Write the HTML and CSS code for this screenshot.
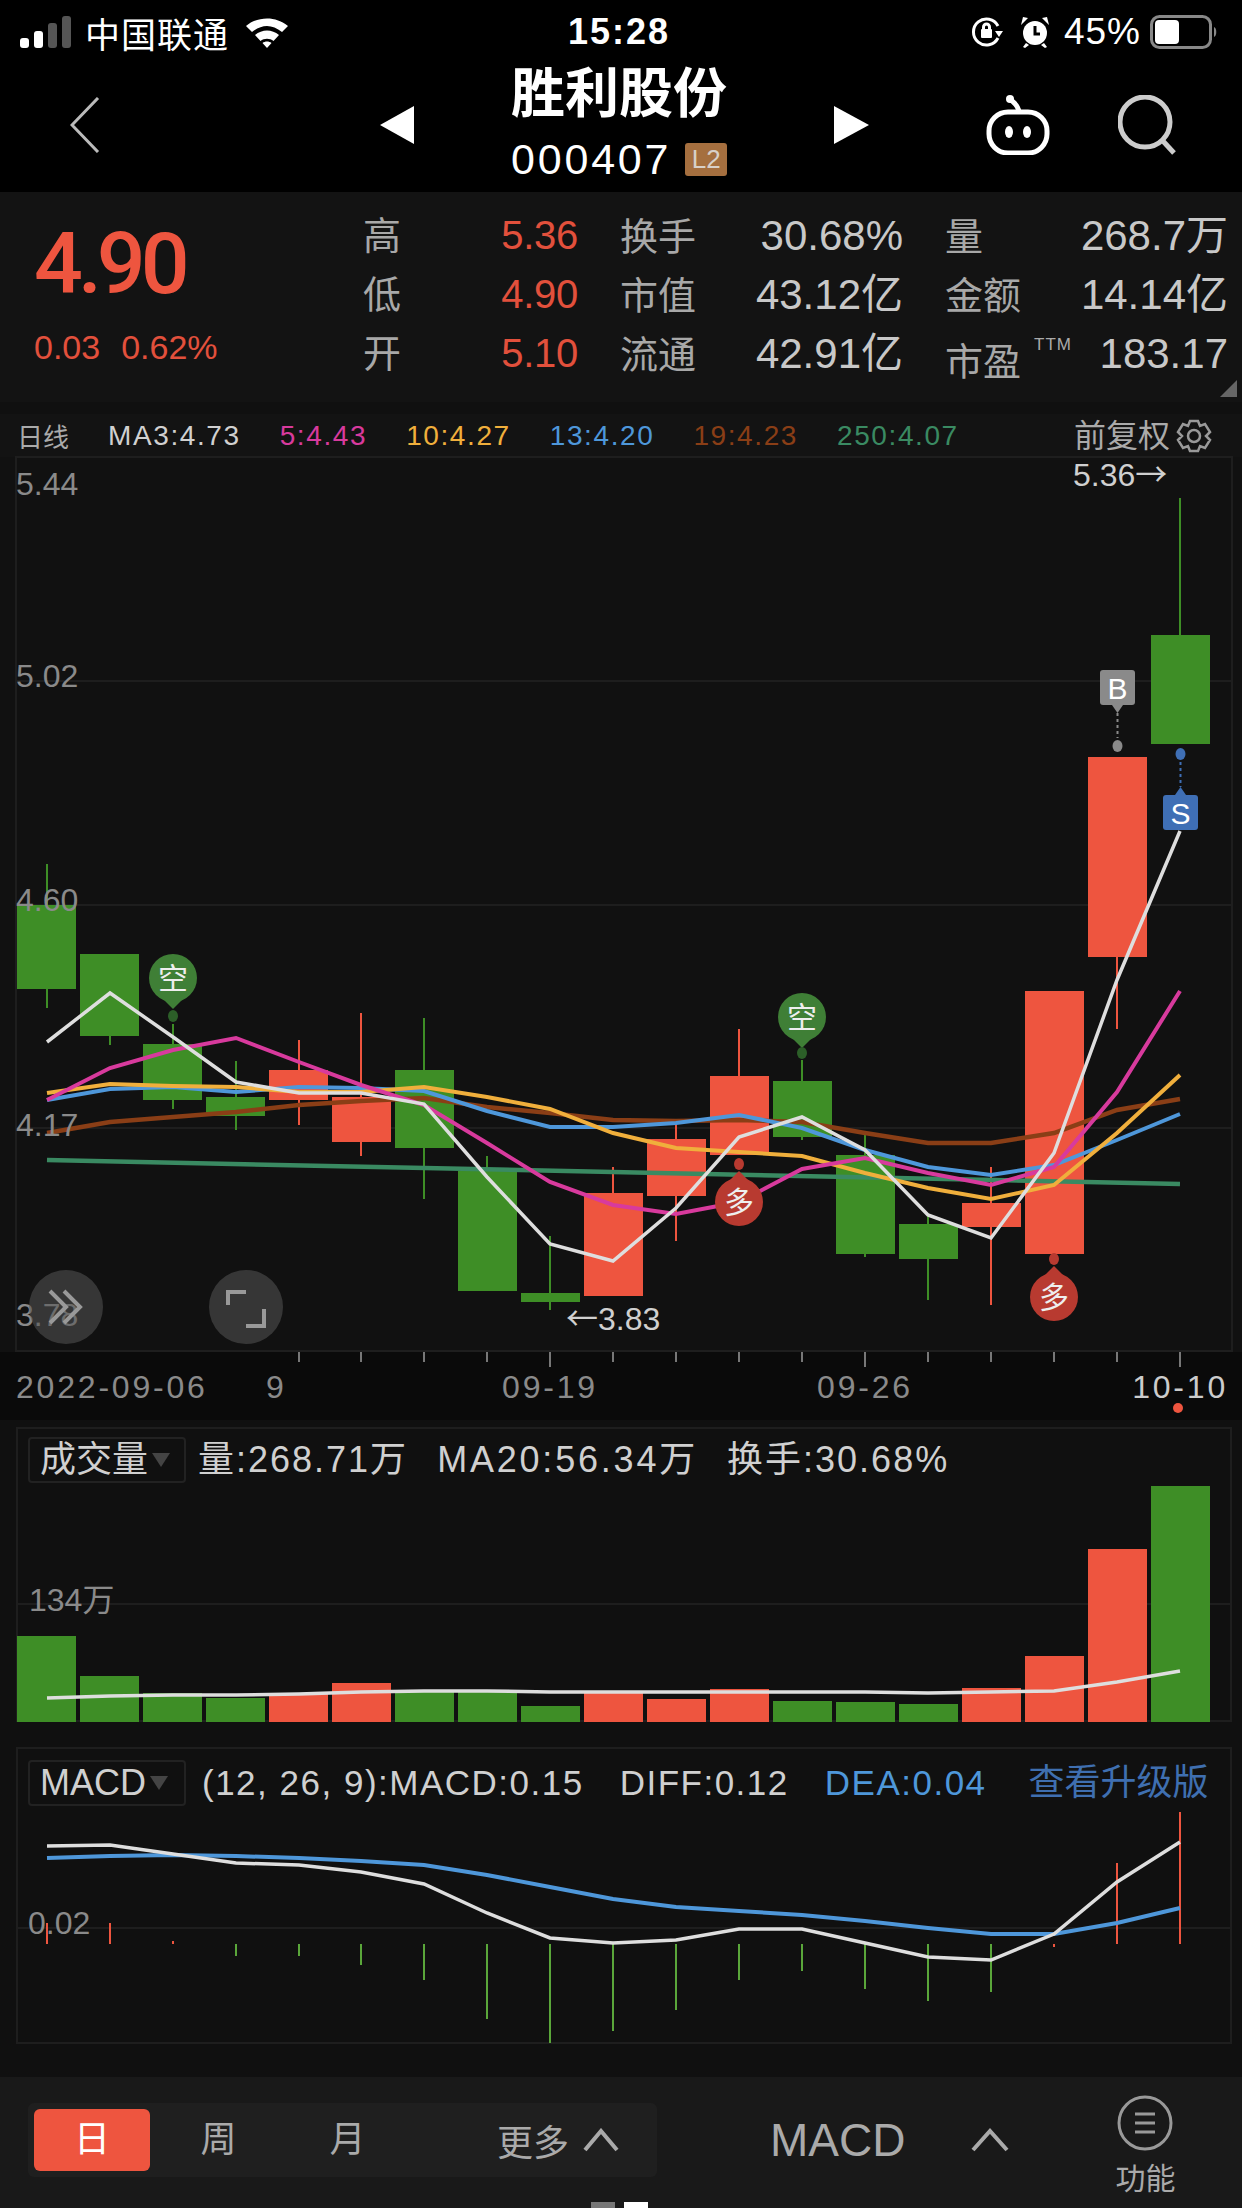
FILE: index.html
```html
<!DOCTYPE html>
<html lang="zh-CN">
<head>
    <meta charset="UTF-8">
    <meta name="viewport" content="width=device-width, initial-scale=1.0">
    <title>胜利股份 000407</title>
    <link rel="stylesheet" href="styles.css">
</head>
<body>

    <div class="status-bar">
        <div class="status-left">
            <svg class="signal" width="52" height="32" viewBox="0 0 52 32">
                <rect class="on" x="0" y="22" width="9" height="10" rx="3"/>
                <rect class="on" x="14" y="15" width="9" height="17" rx="3"/>
                <rect class="off" x="28" y="7" width="9" height="25" rx="3"/>
                <rect class="off" x="42" y="0" width="9" height="32" rx="3"/>
            </svg>
            <span class="carrier">中国联通</span>
            <svg class="wifi" width="46" height="32" viewBox="0 0 46 32">
                <path d="M2 10 C14 0 32 0 44 10 L38 16 C28 8 18 8 8 16 Z"/>
                <path d="M11 19 C18 13 28 13 35 19 L29.500 25 C26 22 20 22 16.500 25 Z"/>
                <path d="M18.500 27 C21 25 25 25 27.500 27 L23 32 Z"/>
            </svg>
        </div>
        <div class="status-time">15:28</div>
        <div class="status-right">
            <svg class="rotate-lock" width="32" height="32" viewBox="0 0 32 32">
                <path d="M27 22 A13 13 0 1 1 27 10"/>
                <path class="solid" d="M24 15 L32 15 L28 21 Z"/>
                <rect class="solid" x="10" y="13" width="11" height="9" rx="1"/>
                <path d="M12.500 13 V11 A3 3 0 0 1 18.500 11 V13"/>
            </svg>
            <svg class="alarm" width="30" height="32" viewBox="0 0 30 32">
                <circle class="solid" cx="15" cy="17" r="12"/>
                <path class="hand" d="M15 10 V18 L20 18"/>
                <path class="solid" d="M1 9 L8 2 L3 1 Z M29 9 L22 2 L27 1 Z M6 27 L3 31 L5 32 L9 29 Z M24 27 L27 31 L25 32 L21 29 Z"/>
            </svg>
            <span class="battery-text">45%</span>
            <svg class="battery" width="68" height="34" viewBox="0 0 68 34">
                <rect class="shell" x="1.500" y="1.500" width="59" height="31" rx="8"/>
                <rect class="level" x="5" y="5" width="24" height="24" rx="4"/>
                <path class="cap" d="M64 12 C67 13 67 21 64 22 Z"/>
            </svg>
        </div>
    </div>

    <div class="nav">
        <svg class="nav-back" width="30" height="56" viewBox="0 0 30 56">
            <path d="M28 1 L2 28 L28 55"/>
        </svg>
        <svg class="nav-prev" width="34" height="38" viewBox="0 0 34 38">
            <path d="M34 0 V38 L0 19 Z"/>
        </svg>
        <div class="nav-title">
            <div class="stock-name">胜利股份</div>
            <div class="stock-code">000407<span class="badge-l2">L2</span></div>
        </div>
        <svg class="nav-next" width="35" height="38" viewBox="0 0 35 38">
            <path d="M0 0 V38 L35 19 Z"/>
        </svg>
        <svg class="nav-robot" width="64" height="60" viewBox="0 0 64 60">
            <path class="outline" d="M25 5 C28 8 32 10 33 17"/>
            <circle class="fill" cx="24" cy="4" r="4"/>
            <rect class="outline" x="3" y="17" width="58" height="41" rx="19"/>
            <ellipse class="fill" cx="23" cy="37" rx="4" ry="6"/>
            <ellipse class="fill" cx="41" cy="37" rx="4" ry="6"/>
        </svg>
        <svg class="nav-search" width="60" height="60" viewBox="0 0 60 60">
            <circle cx="27" cy="27" r="25"/>
            <path d="M44 45 L56 58"/>
        </svg>
    </div>

    <div class="quote">
        <div class="quote-main">
            <div class="price">4.90</div>
            <div class="change"><span>0.03</span><span>0.62%</span></div>
        </div>
        <div class="quote-grid">
            <div class="cell"><span class="label">高</span><span class="up-text">5.36</span></div>
            <div class="cell"><span class="label">换手</span><span class="value">30.68%</span></div>
            <div class="cell"><span class="label">量</span><span class="value">268.7万</span></div>
            <div class="cell"><span class="label">低</span><span class="up-text">4.90</span></div>
            <div class="cell"><span class="label">市值</span><span class="value">43.12亿</span></div>
            <div class="cell"><span class="label">金额</span><span class="value">14.14亿</span></div>
            <div class="cell"><span class="label">开</span><span class="up-text">5.10</span></div>
            <div class="cell"><span class="label">流通</span><span class="value">42.91亿</span></div>
            <div class="cell"><span class="label label-low">市盈<sup class="ttm">TTM</sup></span><span class="value">183.17</span></div>
        </div>
        <div class="corner"></div>
    </div>

    <div class="legend">
        <span class="legend-name">日线</span>
        <span class="ma3">MA3:4.73</span>
        <span class="ma5">5:4.43</span>
        <span class="ma10">10:4.27</span>
        <span class="ma13">13:4.20</span>
        <span class="ma19">19:4.23</span>
        <span class="ma250">250:4.07</span>
        <span class="legend-right">前复权
            <svg class="gear" width="36" height="36" viewBox="0 0 36 36">
                <path d="M14 3 H22 L24 8 L29 6 L34 14 L30 18 L34 22 L29 30 L24 28 L22 33 H14 L12 28 L7 30 L2 22 L6 18 L2 14 L7 6 L12 8 Z"/>
                <circle cx="18" cy="18" r="6"/>
            </svg>
        </span>
    </div>

    <svg class="chart-main" width="1242" height="963" viewBox="0 457 1242 963">
        <rect class="axis-bg" x="0" y="1352" width="1242" height="68"/>
        <rect class="frame" x="16" y="457" width="1216" height="894"/>
        <path class="grid" d="M16 681 H1232 M16 905 H1232 M16 1128 H1232"/>

        <!-- candles: body + wick -->
        <g class="down">
            <rect x="46" y="864" width="2" height="144"/><rect x="17" y="905" width="59" height="84"/>
            <rect x="109" y="954" width="2" height="91"/><rect x="80" y="954" width="59" height="82"/>
            <rect x="172" y="1024" width="2" height="85"/><rect x="143" y="1044" width="59" height="56"/>
            <rect x="235" y="1061" width="2" height="69"/><rect x="206" y="1097" width="59" height="19"/>
            <rect x="423" y="1018" width="2" height="181"/><rect x="395" y="1070" width="59" height="78"/>
            <rect x="486" y="1156" width="2" height="135"/><rect x="458" y="1171" width="59" height="120"/>
            <rect x="549" y="1236" width="2" height="74"/><rect x="521" y="1293" width="59" height="9"/>
            <rect x="801" y="1060" width="2" height="80"/><rect x="773" y="1081" width="59" height="56"/>
            <rect x="864" y="1135" width="2" height="122"/><rect x="836" y="1155" width="59" height="99"/>
            <rect x="927" y="1215" width="2" height="85"/><rect x="899" y="1224" width="59" height="35"/>
            <rect x="1179" y="498" width="2" height="246"/><rect x="1151" y="635" width="59" height="109"/>
        </g>
        <g class="rise">
            <rect x="298" y="1040" width="2" height="85"/><rect x="269" y="1070" width="59" height="30"/>
            <rect x="360" y="1013" width="2" height="143"/><rect x="332" y="1097" width="59" height="45"/>
            <rect x="612" y="1167" width="2" height="129"/><rect x="584" y="1193" width="59" height="103"/>
            <rect x="675" y="1124" width="2" height="117"/><rect x="647" y="1139" width="59" height="57"/>
            <rect x="738" y="1029" width="2" height="126"/><rect x="710" y="1076" width="59" height="79"/>
            <rect x="990" y="1167" width="2" height="138"/><rect x="962" y="1203" width="59" height="24"/>
            <rect x="1025" y="991" width="59" height="263"/>
            <rect x="1116" y="957" width="2" height="72"/><rect x="1088" y="757" width="59" height="200"/>
        </g>

        <!-- moving averages -->
        <path class="line line-ma250" d="M47 1160 L1180 1184"/>
        <polyline class="line line-ma19" points="47,1133 110,1122 173,1117 236,1112 299,1105 361,1101 424,1098 487,1107 550,1113 613,1120 676,1121 739,1120 802,1122 865,1133 928,1143 991,1143 1054,1133 1117,1110 1180,1099"/>
        <polyline class="line line-ma13" points="47,1100 110,1089 173,1087 236,1092 299,1087 361,1088 424,1091 487,1111 550,1127 613,1127 676,1123 739,1115 802,1128 865,1150 928,1167 991,1175 1054,1165 1117,1140 1180,1114"/>
        <polyline class="line line-ma10" points="47,1093 110,1084 173,1086 236,1087 299,1092 361,1092 424,1087 487,1097 550,1109 613,1133 676,1148 739,1152 802,1156 865,1173 928,1188 991,1199 1054,1185 1117,1133 1180,1075"/>
        <polyline class="line line-ma5" points="47,1100 110,1068 173,1050 236,1038 299,1062 361,1085 424,1105 487,1143 550,1182 613,1205 676,1214 739,1202 802,1169 865,1158 928,1173 991,1185 1054,1167 1117,1092 1180,991"/>
        <polyline class="line line-ma3" points="47,1042 110,993 173,1037 236,1082 299,1093 361,1093 424,1104 487,1177 550,1244 613,1261 676,1208 739,1137 802,1117 865,1150 928,1215 991,1238 1054,1153 1117,980 1180,831"/>

        <!-- axis labels -->
        <text class="axis-label" x="16" y="495">5.44</text>
        <text class="axis-label" x="16" y="687">5.02</text>
        <text class="axis-label" x="16" y="911">4.60</text>
        <text class="axis-label" x="16" y="1136">4.17</text>
        <text class="axis-label" x="16" y="1326">3.78</text>
        <text class="mark-label" x="1073" y="486">5.36<tspan class="arrow">→</tspan></text>
        <text class="mark-label" x="566" y="1330"><tspan class="arrow">←</tspan>3.83</text>

        <!-- trade marks -->
        <g class="sign-short">
            <circle cx="173" cy="978" r="24"/>
            <path d="M161 997 H185 L173 1009 Z"/>
            <ellipse class="sign-dot" cx="173" cy="1016" rx="5" ry="6"/>
            <text class="sign-text" x="173" y="989">空</text>
            <circle cx="802" cy="1017" r="24"/>
            <path d="M790 1036 H814 L802 1048 Z"/>
            <ellipse class="sign-dot" cx="802" cy="1053" rx="5" ry="6"/>
            <text class="sign-text" x="802" y="1028">空</text>
        </g>
        <g class="sign-long">
            <circle cx="739" cy="1202" r="24"/>
            <path d="M727 1183 H751 L739 1171 Z"/>
            <ellipse cx="739" cy="1164" rx="5" ry="6"/>
            <text class="sign-text" x="739" y="1213">多</text>
            <circle cx="1054" cy="1297" r="24"/>
            <path d="M1042 1278 H1066 L1054 1266 Z"/>
            <ellipse cx="1054" cy="1259" rx="5" ry="6"/>
            <text class="sign-text" x="1054" y="1308">多</text>
        </g>
        <g class="sign-buy">
            <rect x="1100" y="670" width="35" height="35" rx="3"/>
            <path d="M1112 705 H1123 L1117.500 713 Z"/>
            <path class="dots" d="M1117.500 713 V738"/>
            <ellipse cx="1117.500" cy="746" rx="5" ry="6"/>
            <text class="tag-text" x="1117.500" y="699">B</text>
        </g>
        <g class="sign-sell">
            <rect x="1163" y="795" width="35" height="35" rx="3"/>
            <path d="M1175 795 H1186 L1180.500 787 Z"/>
            <path class="dots" d="M1180.500 762 V787"/>
            <ellipse cx="1180.500" cy="754" rx="5" ry="6"/>
            <text class="tag-text" x="1180.500" y="824">S</text>
        </g>

        <!-- floating buttons -->
        <circle class="float-btn" cx="66" cy="1307" r="37"/>
        <path class="float-icon" d="M50 1291 L66 1307 L50 1323 M64 1291 L80 1307 L64 1323"/>
        <circle class="float-btn" cx="246" cy="1307" r="37"/>
        <path class="float-icon" d="M228 1305 V1292 H246 M264 1309 V1326 H246"/>

        <!-- date axis -->
        <path class="tick" d="M299 1352 V1362 M361 1352 V1362 M424 1352 V1362 M487 1352 V1362 M613 1352 V1362 M676 1352 V1362 M739 1352 V1362 M802 1352 V1362 M928 1352 V1362 M991 1352 V1362 M1054 1352 V1362 M1117 1352 V1362 M550 1352 V1367 M865 1352 V1367 M1180 1352 V1367"/>
        <text class="date" x="16" y="1398">2022-09-06</text>
        <text class="date" x="266" y="1398">9</text>
        <text class="date date-mid" x="550" y="1398">09-19</text>
        <text class="date date-mid" x="865" y="1398">09-26</text>
        <text class="date date-last" x="1228" y="1398">10-10</text>
        <circle class="today" cx="1178" cy="1408" r="5"/>
    </svg>

    <div class="panel panel-vol">
        <div class="panel-head">
            <div class="picker">成交量<span class="picker-arrow"></span></div>
            <div class="readouts readouts-vol">
                <span>量:268.71万</span>
                <span class="vol-ma">MA20:56.34万</span>
                <span>换手:30.68%</span>
            </div>
        </div>
        <svg class="panel-chart" width="1216" height="239" viewBox="16 1483 1216 239">
            <path class="grid" d="M16 1604 H1232"/>
            <g class="down">
                <rect x="17" y="1636" width="59" height="86"/>
                <rect x="80" y="1676" width="59" height="46"/>
                <rect x="143" y="1693" width="59" height="29"/>
                <rect x="206" y="1698" width="59" height="24"/>
                <rect x="395" y="1690" width="59" height="32"/>
                <rect x="458" y="1690" width="59" height="32"/>
                <rect x="521" y="1706" width="59" height="16"/>
                <rect x="773" y="1701" width="59" height="21"/>
                <rect x="836" y="1702" width="59" height="20"/>
                <rect x="899" y="1704" width="59" height="18"/>
                <rect x="1151" y="1486" width="59" height="236"/>
            </g>
            <g class="rise">
                <rect x="269" y="1693" width="59" height="29"/>
                <rect x="332" y="1683" width="59" height="39"/>
                <rect x="584" y="1692" width="59" height="30"/>
                <rect x="647" y="1699" width="59" height="23"/>
                <rect x="710" y="1689" width="59" height="33"/>
                <rect x="962" y="1688" width="59" height="34"/>
                <rect x="1025" y="1656" width="59" height="66"/>
                <rect x="1088" y="1549" width="59" height="173"/>
            </g>
            <polyline class="line line-ma3" points="47,1698 110,1696 173,1695 236,1695 299,1694 361,1692 424,1691 487,1691 550,1692 613,1692 676,1692 739,1692 802,1692 865,1692 928,1693 991,1692 1054,1691 1117,1682 1180,1671"/>
            <text class="axis-label" x="29" y="1611">134万</text>
        </svg>
    </div>

    <div class="panel panel-macd">
        <div class="panel-head">
            <div class="picker">MACD<span class="picker-arrow"></span></div>
            <div class="readouts readouts-macd">
                <span>(12, 26, 9):MACD:0.15</span>
                <span>DIFF:0.12</span>
                <span class="dea">DEA:0.04</span>
                <span class="upgrade">查看升级版</span>
            </div>
        </div>
        <svg class="panel-chart" width="1216" height="238" viewBox="16 1806 1216 238">
            <path class="grid" d="M16 1928 H1232"/>
            <text class="axis-label" x="28" y="1934">0.02</text>
            <path class="hist-up" d="M47 1923 V1944 M110 1923 V1944 M173 1941 V1944 M1054 1944 V1947 M1117 1863 V1944 M1180 1812 V1944"/>
            <path class="hist-down" d="M236 1944 V1956 M299 1944 V1956 M361 1944 V1965 M424 1944 V1980 M487 1944 V2019 M550 1944 V2043 M613 1944 V2031 M676 1944 V2010 M739 1944 V1980 M802 1944 V1971 M865 1944 V1989 M928 1944 V2001 M991 1944 V1992"/>
            <polyline class="line line-ma13" points="47,1858 110,1856 173,1855 236,1856 299,1858 361,1861 424,1865 487,1875 550,1887 613,1899 676,1907 739,1911 802,1915 865,1921 928,1928 991,1934 1054,1934 1117,1923 1180,1908"/>
            <polyline class="line line-ma3" points="47,1846 110,1845 173,1854 236,1863 299,1865 361,1872 424,1884 487,1913 550,1938 613,1943 676,1940 739,1929 802,1929 865,1943 928,1957 991,1960 1054,1934 1117,1882 1180,1842"/>
        </svg>
    </div>

    <div class="toolbar">
        <div class="periods">
            <span class="period period-on">日</span>
            <span class="period">周</span>
            <span class="period">月</span>
            <span class="period-more">更多
                <svg class="caret" width="36" height="24" viewBox="0 0 36 24"><path d="M2 22 L18 3 L34 22"/></svg>
            </span>
        </div>
        <div class="indicator">MACD
            <svg class="caret" width="38" height="24" viewBox="0 0 38 24"><path d="M2 22 L19 3 L36 22"/></svg>
        </div>
        <div class="func">
            <svg class="func-icon" width="56" height="58" viewBox="0 0 56 58">
                <circle cx="28" cy="29" r="26"/>
                <path d="M18 20 H38 M18 29 H38 M18 38 H38"/>
            </svg>
            <span class="func-label">功能</span>
        </div>
        <div class="pager"><span class="pager-dot"></span><span class="pager-dot pager-on"></span></div>
    </div>

</body>
</html>
```

FILE: styles.css
```css
* {
    box-sizing: border-box;
}
body {
    margin: 0;
    width: 1242px;
    height: 2208px;
    overflow: hidden;
    background: #101010;
    font-family: "Liberation Sans", "Noto Sans CJK SC", sans-serif;
    color: #ccc;
}
svg {
    display: block;
}

/* status bar */
.status-bar {
    height: 64px;
    background: #000;
    color: #fff;
    display: grid;
    grid-template-columns: 1fr auto 1fr;
    align-items: center;
    padding: 0 24px 0 20px;
}
.status-left, .status-right {
    display: flex;
    align-items: center;
}
.status-right {
    justify-content: flex-end;
}
.signal .on { fill: #fff; }
.signal .off { fill: #555; }
.carrier {
    font-size: 35px;
    margin-left: 13px;
    letter-spacing: 1px;
}
.wifi {
    margin-left: 15px;
    fill: #fff;
}
.status-time {
    font-size: 36px;
    font-weight: bold;
    letter-spacing: 2px;
}
.rotate-lock path, .rotate-lock rect {
    fill: none;
    stroke: #fff;
    stroke-width: 3;
}
.rotate-lock .solid {
    fill: #fff;
    stroke: none;
}
.alarm {
    margin-left: 17px;
}
.alarm .solid { fill: #fff; }
.alarm .hand {
    fill: none;
    stroke: #000;
    stroke-width: 3;
}
.battery-text {
    font-size: 37px;
    margin-left: 14px;
    letter-spacing: 1px;
}
.battery {
    margin-left: 9px;
}
.battery .shell {
    fill: none;
    stroke: #888;
    stroke-width: 3;
}
.battery .level { fill: #fff; }
.battery .cap { fill: #888; }

/* nav */
.nav {
    height: 128px;
    background: #000;
    display: flex;
    align-items: center;
    padding: 0 0 6px 70px;
}
.nav-back path {
    fill: none;
    stroke: #bbb;
    stroke-width: 3;
}
.nav-prev {
    margin-left: 280px;
    fill: #fff;
}
.nav-next {
    margin-left: 107px;
    fill: #fff;
}
.nav-title {
    margin-left: 97px;
    width: 216px;
    align-self: flex-start;
    padding-top: 1px;
}
.stock-name {
    font-size: 54px;
    line-height: 58px;
    font-weight: bold;
    color: #fff;
    white-space: nowrap;
}
.stock-code {
    margin-top: 20px;
    font-size: 43px;
    line-height: 33px;
    letter-spacing: 2.800px;
    color: #fff;
    display: flex;
    align-items: center;
    white-space: nowrap;
}
.badge-l2 {
    margin-left: 14px;
    width: 48px;
    height: 33px;
    line-height: 33px;
    border-radius: 3px;
    background: #a56f3f;
    color: #d8d0c8;
    font-size: 26px;
    letter-spacing: 0;
    text-align: center;
}
.nav-robot {
    margin-left: 117px;
}
.nav-robot .outline {
    fill: none;
    stroke: #fff;
    stroke-width: 5;
}
.nav-robot .fill { fill: #fff; }
.nav-search {
    margin-left: 68px;
    fill: none;
    stroke: #ccc;
    stroke-width: 5;
}

/* quote */
.quote {
    position: relative;
    height: 210px;
    background: #131313;
    display: flex;
    padding-left: 34px;
}
.quote-main {
    width: 329px;
}
.price {
    margin-top: 27px;
    font-family: Roboto, "Liberation Sans", sans-serif;
    font-size: 86px;
    line-height: 90px;
    letter-spacing: -5px;
    color: #ee553f;
    font-weight: 500;
}
.change {
    margin-top: 18px;
    font-size: 34px;
    line-height: 40px;
    color: #e2503c;
    display: flex;
    gap: 21px;
}
.quote-grid {
    display: grid;
    grid-template-columns: 215px 283px 283px;
    grid-auto-rows: 59px;
    column-gap: 42px;
    align-content: center;
    padding-bottom: 6px;
    font-size: 42px;
    line-height: 59px;
}
.cell {
    display: flex;
    justify-content: space-between;
    align-items: baseline;
    white-space: nowrap;
}
.label {
    font-size: 38px;
    color: #a8a8a8;
}
.label-low {
    position: relative;
    top: 7px;
}
.ttm {
    position: absolute;
    left: 89px;
    top: 2px;
    font-size: 17px;
    line-height: 20px;
    color: #aaa;
    letter-spacing: 1px;
}
.value {
    color: #c8c8c8;
}
.up-text {
    color: #e2503c;
    font-size: 40px;
    letter-spacing: -0.300px;
}
.corner {
    position: absolute;
    right: 5px;
    bottom: 5px;
    width: 17px;
    height: 17px;
    background: #666;
    clip-path: polygon(100% 0, 100% 100%, 0 100%);
}

/* ma legend */
.legend {
    margin-top: 12px;
    height: 43px;
    background: #131313;
    display: flex;
    align-items: center;
    gap: 39px;
    padding: 0 30px 0 17px;
    font-size: 28px;
    letter-spacing: 1.600px;
    white-space: nowrap;
}
.legend-name {
    color: #aaa;
    font-size: 26px;
    letter-spacing: 0;
}
.ma3 { color: #d0d0d0; }
.ma5 { color: #d83a9d; }
.ma10 { color: #f0af3c; }
.ma13 { color: #4e97da; }
.ma19 { color: #8a3e16; }
.ma250 { color: #3a8a62; }
.legend-right {
    margin-left: auto;
    display: flex;
    align-items: center;
    gap: 6px;
    font-size: 32px;
    line-height: 36px;
    letter-spacing: 0;
    color: #aaa;
}
.gear {
    fill: none;
    stroke: #999;
    stroke-width: 2.500;
}

/* chart bits */
.chart-main {
    background: #111;
    overflow: visible;
}
.axis-bg { fill: #0a0a0a; }
.frame {
    fill: none;
    stroke: #1e1e1e;
    stroke-width: 2;
}
.grid {
    fill: none;
    stroke: #1e1e1e;
    stroke-width: 2;
}
.down { fill: #3e8e26; }
.rise { fill: #ee553f; }
.line {
    fill: none;
    stroke-width: 4;
}
.line-ma3 { stroke: #dedede; stroke-width: 3.500; }
.line-ma5 { stroke: #d83a9d; }
.line-ma10 { stroke: #f0af3c; }
.line-ma13 { stroke: #4e97da; }
.line-ma19 { stroke: #8a3e16; stroke-width: 4.500; }
.line-ma250 { stroke: #3a8a62; stroke-width: 4.500; }
.axis-label {
    font-size: 32px;
    fill: #8a8a8a;
}
.mark-label {
    font-size: 32px;
    fill: #d0d0d0;
}
.arrow {
    font-family: "Noto Sans CJK SC", sans-serif;
}
.sign-short { fill: #3f7f36; }
.sign-short .sign-dot { fill: #2c5f28; }
.sign-long { fill: #b83a30; }
.sign-text {
    font-size: 30px;
    fill: #eee;
    text-anchor: middle;
}
.sign-buy { fill: #8a8a8a; }
.sign-sell { fill: #3f6fb5; }
.dots {
    fill: none;
    stroke-width: 2;
    stroke-dasharray: 3 3;
}
.sign-buy .dots { stroke: #8a8a8a; }
.sign-sell .dots { stroke: #3f6fb5; }
.tag-text {
    font-size: 30px;
    fill: #fff;
    text-anchor: middle;
}
.float-btn {
    fill: #555;
    fill-opacity: 0.55;
}
.float-icon {
    fill: none;
    stroke: #999;
    stroke-width: 4;
}
.tick {
    fill: none;
    stroke: #777;
    stroke-width: 2;
}
.date {
    font-size: 32px;
    letter-spacing: 2.800px;
    fill: #8a8a8a;
}
.date-mid {
    text-anchor: middle;
}
.date-last {
    text-anchor: end;
    fill: #ccc;
}
.today { fill: #ee553f; }

/* sub panels */
.panel {
    width: 1216px;
    margin-left: 16px;
    box-shadow: inset 0 0 0 2px #1e1e1e;
}
.panel-vol {
    margin-top: 7px;
    padding-top: 10px;
}
.panel-macd {
    margin-top: 25px;
    padding-top: 13px;
}
.panel-head {
    height: 46px;
    margin-left: 12px;
    display: flex;
    align-items: center;
    white-space: nowrap;
}
.picker {
    width: 158px;
    height: 46px;
    border: 2px solid #222;
    border-radius: 4px;
    padding-left: 10px;
    font-size: 36px;
    line-height: 42px;
    color: #d0d0d0;
    display: flex;
    align-items: center;
    gap: 4px;
}
.picker-arrow {
    width: 18px;
    height: 14px;
    background: #444;
    clip-path: polygon(0 0, 100% 0, 50% 100%);
}
.readouts {
    display: flex;
    align-items: center;
    line-height: 46px;
    color: #d0d0d0;
}
.readouts-vol {
    margin-left: 12px;
    gap: 29px;
    font-size: 36px;
    letter-spacing: 2px;
}
.vol-ma {
    letter-spacing: 2.800px;
}
.readouts-macd {
    margin-left: 16px;
    gap: 36px;
    font-size: 35px;
    letter-spacing: 1.500px;
}
.dea { color: #4e97da; }
.upgrade {
    margin-left: 6px;
    color: #3f6fb0;
    font-size: 36px;
    letter-spacing: 0;
}
.hist-up {
    fill: none;
    stroke: #ee553f;
    stroke-width: 2;
}
.hist-down {
    fill: none;
    stroke: #5aa63a;
    stroke-width: 2;
}

/* toolbar */
.toolbar {
    position: relative;
    margin-top: 33px;
    height: 131px;
    background: #191919;
    display: flex;
    padding: 26px 0 0 28px;
}
.periods {
    width: 629px;
    height: 74px;
    padding: 6px;
    border-radius: 6px;
    background: #1f1f1f;
    display: flex;
    align-items: center;
    font-size: 36px;
    color: #aaa;
}
.period {
    width: 129px;
    height: 62px;
    line-height: 62px;
    text-align: center;
}
.period-on {
    width: 116px;
    margin-right: 4px;
    background: #ee553f;
    border-radius: 6px;
    color: #fff;
}
.period-more {
    margin-left: 85px;
    display: flex;
    align-items: center;
    gap: 14px;
}
.caret {
    fill: none;
    stroke: #aaa;
    stroke-width: 4;
}
.indicator {
    margin-left: 113px;
    height: 74px;
    display: flex;
    align-items: center;
    gap: 66px;
    font-size: 46px;
    color: #aaa;
}
.func {
    margin-left: 106px;
    margin-top: -9px;
    width: 60px;
    display: flex;
    flex-direction: column;
    align-items: center;
    font-size: 30px;
    line-height: 44px;
    color: #aaa;
    white-space: nowrap;
}
.func-label {
    margin-top: 5px;
}
.func-icon {
    fill: none;
    stroke: #999;
    stroke-width: 3;
}
.pager {
    position: absolute;
    left: 591px;
    bottom: 0;
    display: flex;
    gap: 9px;
}
.pager-dot {
    width: 24px;
    height: 6px;
    background: #777;
}
.pager-on {
    background: #fff;
}
```
